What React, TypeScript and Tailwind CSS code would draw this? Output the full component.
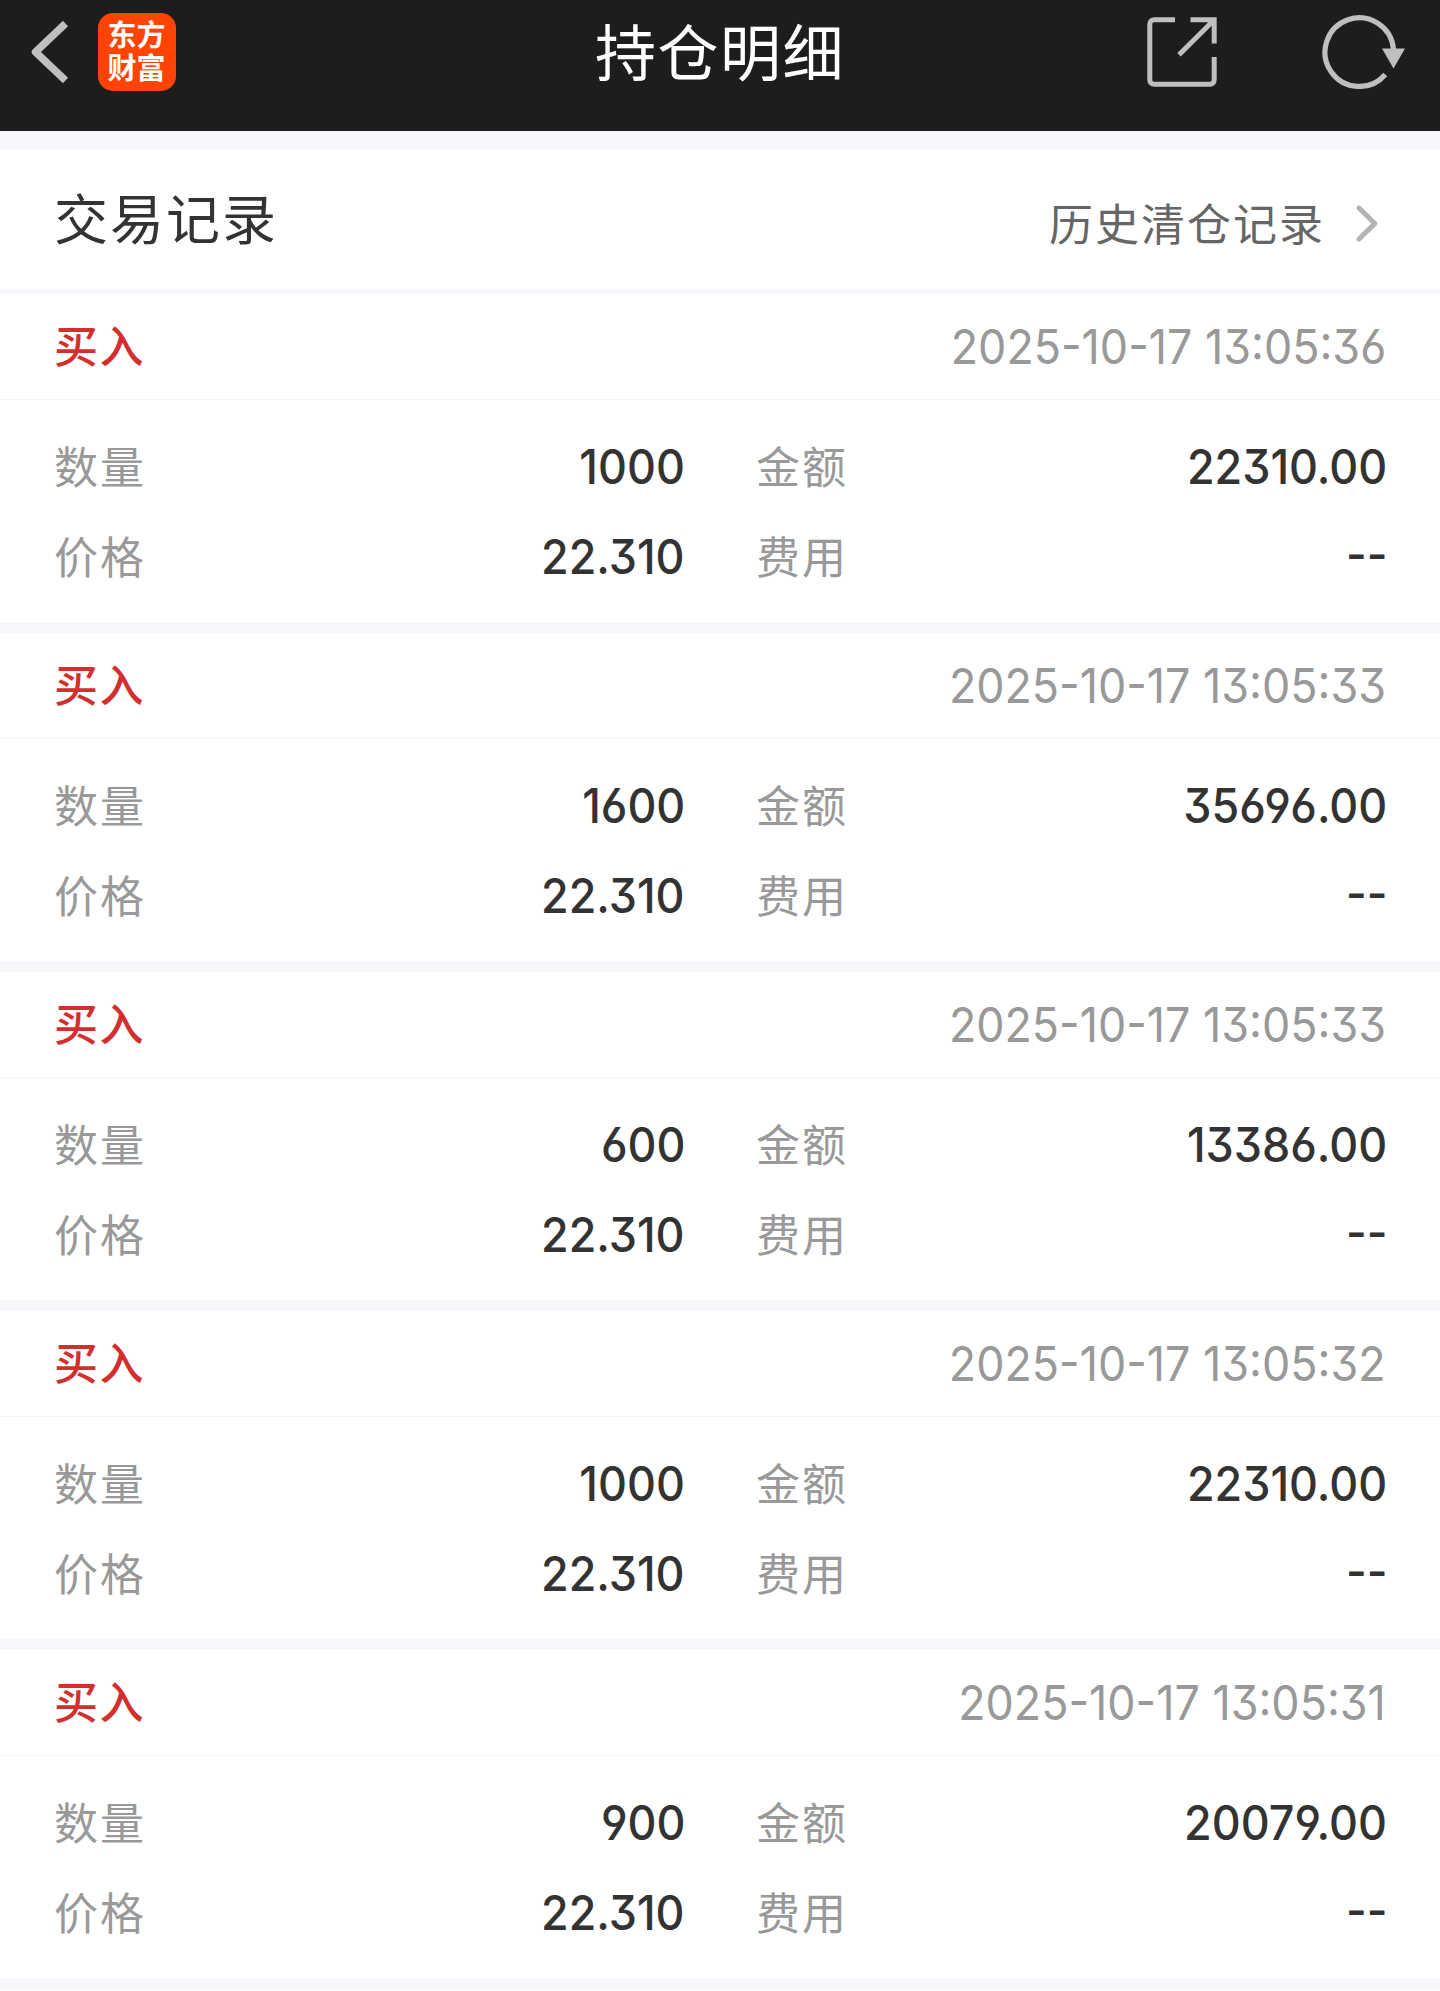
type Trade = {
  time: string
  quantity: string
  amount: string
  price: string
  fee: string
}

const trades: Trade[] = [
  { time: '2025-10-17 13:05:36', quantity: '1000', amount: '22310.00', price: '22.310', fee: '--' },
  { time: '2025-10-17 13:05:33', quantity: '1600', amount: '35696.00', price: '22.310', fee: '--' },
  { time: '2025-10-17 13:05:33', quantity: '600', amount: '13386.00', price: '22.310', fee: '--' },
  { time: '2025-10-17 13:05:32', quantity: '1000', amount: '22310.00', price: '22.310', fee: '--' },
  { time: '2025-10-17 13:05:31', quantity: '900', amount: '20079.00', price: '22.310', fee: '--' },
]

function BackIcon() {
  return (
    <svg width="38" height="64" viewBox="0 0 38 64" fill="none" stroke="#bfbfbf" strokeWidth="7.5" strokeLinejoin="round">
      <path d="M34.500 3.500L4.500 32l30 28.500" />
    </svg>
  )
}

function ShareIcon() {
  return (
    <svg width="70" height="70" viewBox="0 0 70 70" fill="none" stroke="#bfbfbf" strokeWidth="5">
      <path d="M28 2.800H7A4.200 4.200 0 0 0 2.800 7v56A4.200 4.200 0 0 0 7 67.200h56A4.200 4.200 0 0 0 67.200 63V40" />
      <path d="M43.500 2.800H67.200V26.500M66 4L32 37.800" />
    </svg>
  )
}

function RefreshIcon() {
  return (
    <svg width="83" height="74" viewBox="0 0 83 74" fill="none">
      <path d="M71.500 34.500A34.300 34.300 0 1 0 63.300 59.500" stroke="#bfbfbf" strokeWidth="5.200" />
      <path d="M60 33.500h23L71.500 53.500z" fill="#bfbfbf" />
    </svg>
  )
}

function ChevronIcon() {
  return (
    <svg width="22" height="37" viewBox="0 0 22 37" fill="none" stroke="#b3b3b3" strokeWidth="5" strokeLinecap="round" strokeLinejoin="round">
      <path d="M3 3l15.800 15.500L3 34" />
    </svg>
  )
}

// flat-top 3, open 6/9 and raised hyphens and colons
const digits =
  "origin-right font-['Inter','Noto_Sans_CJK_SC',sans-serif] text-[48px] leading-none [font-feature-settings:'cv09','cv03','cv04','case']"

function Field({ label, value }: { label: string; value: string }) {
  return (
    <div className="flex h-[90px] items-center justify-between">
      <span className="pb-[2px] text-[44px] leading-none tracking-[2px] text-[#999999]">{label}</span>
      <span className={`${digits} scale-x-[.935] pt-[2px] font-[460] text-[#333333]`}>{value}</span>
    </div>
  )
}

function TradeCard({ trade }: { trade: Trade }) {
  return (
    <li className="border-b-[11px] border-[#f6f7fa]">
      <div className="flex h-[106px] items-center justify-between border-b border-[#f5f6f7] px-[54px]">
        <span className="pb-[5px] text-[44px] font-medium leading-none tracking-[1.5px] text-[#d32f2f]">买入</span>
        <span className={`${digits} scale-x-[.934] pt-px text-[#999999]`}>{trade.time}</span>
      </div>
      <div className="grid h-[222px] grid-cols-2 content-center gap-x-[71px] pl-[54px] pr-[53px]">
        <Field label="数量" value={trade.quantity} />
        <Field label="金额" value={trade.amount} />
        <Field label="价格" value={trade.price} />
        <Field label="费用" value={trade.fee} />
      </div>
    </li>
  )
}

export default function App() {
  return (
    <div className="h-[1991px] w-[1440px] overflow-hidden bg-white font-['Noto_Sans_CJK_SC',sans-serif]">
      <header className="grid h-[131px] grid-cols-[1fr_auto_1fr] items-center bg-[#1d1d1d] pb-7 pl-[31px] pr-[35px]">
        <div className="flex items-center gap-[28.5px]">
          <BackIcon />
          <div className="flex size-[78px] items-center justify-center rounded-[15px] bg-[#ff4406] pb-[4px]">
            <span className="w-[60px] text-center text-[29px] font-bold leading-[33px] text-white">东方财富</span>
          </div>
        </div>
        <h1 className="pb-[5px] pl-[4px] text-[61px] leading-none tracking-[1.5px] text-white">持仓明细</h1>
        <div className="flex items-center justify-end gap-[105px]">
          <ShareIcon />
          <RefreshIcon />
        </div>
      </header>

      <main className="border-t-[18px] border-[#f6f7fa]">
        <div className="flex h-[145px] items-center justify-between border-b-[5px] border-[#f6f7fa] pl-[54px] pr-[62px]">
          <h2 className="pb-[5px] text-[54px] leading-none tracking-[2px] text-[#333333]">交易记录</h2>
          <a className="flex items-center gap-[31px] pt-[8px] text-[#666666]">
            <span className="pb-[3px] text-[44px] leading-none tracking-[2px]">历史清仓记录</span>
            <ChevronIcon />
          </a>
        </div>
        <ul>
          {trades.map((trade, i) => (
            <TradeCard key={i} trade={trade} />
          ))}
        </ul>
      </main>
    </div>
  )
}
